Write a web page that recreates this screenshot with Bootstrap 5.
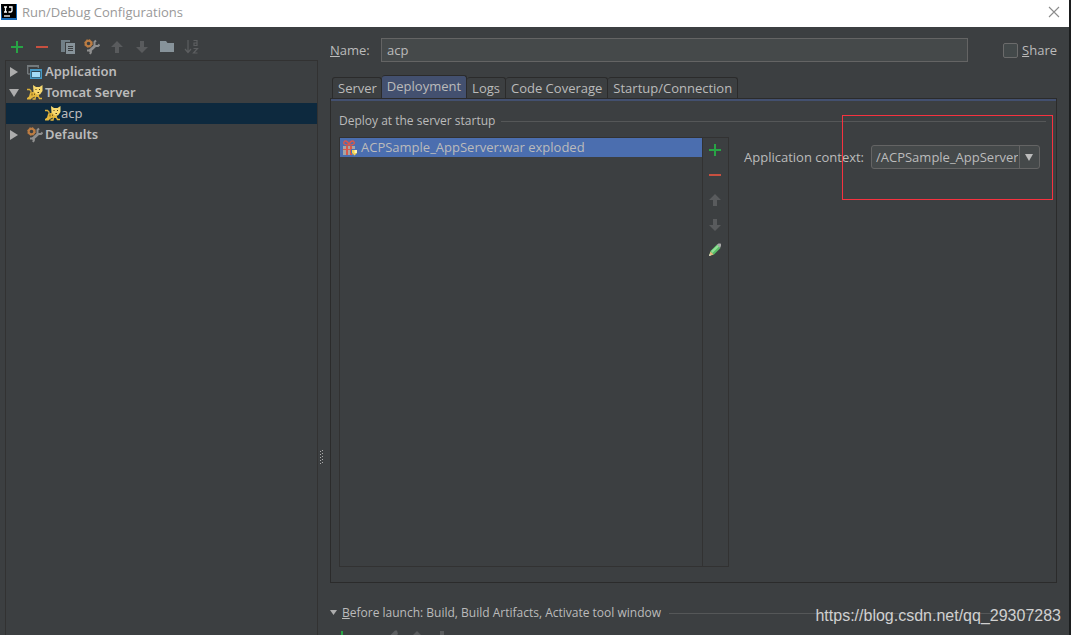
<!DOCTYPE html>
<html lang="en">
<head>
<meta charset="utf-8">
<meta name="viewport" content="width=device-width, initial-scale=1">
<title>Run/Debug Configurations</title>
<link href="https://cdn.jsdelivr.net/npm/bootstrap@5.3.0/dist/css/bootstrap.min.css" rel="stylesheet">
<style>
  :root { --bg: #3c3f41; --fg: #bbbbbb; --edge: #2b2b2b; --line: #555758; --soft: #323232; }
  body { font: 13px/20px "Open Sans", "Noto Sans", sans-serif; color: var(--fg); background: var(--bg); }
  svg { display: block; flex: none; }
  .window { height: 100vh; overflow: hidden; border-right: 2px solid #1b1d1e; }
  .titlebar { height: 27px; background: #fff; color: #999; padding: 0 7px 4px 1px; gap: 5px; }
  .tool { background: none; border: 0; padding: 0; width: 16px; height: 16px; color: #595b5d; }
  .workspace { min-height: 0; }
  .sidebar { width: 318px; padding-left: 5px; }
  .sidebar-tools { height: 33px; gap: 9px; padding: 7px 0 0 4px; }
  .tree { border: 1px solid var(--soft); border-bottom: 0; }
  .tree button { display: flex; align-items: center; width: 100%; height: 21px; border: 0; background: none; color: inherit; padding: 0; font-family: "Noto Sans", sans-serif; font-weight: 600; line-height: 19px; text-align: left; }
  .tree .arrow { margin-right: 5px; }
  .tree .kind { margin-right: 2px; }
  .tree .leaf { background: #0d293e; padding-left: 39px; font-weight: 400; }
  .splitter { width: 12px; padding-top: 206px; }
  .content { padding: 11px 12px 0 0; }
  .name-row { height: 24px; }
  .name-label { width: 51px; }
  .name-input { height: 24px; background: #45494a; border: 1px solid #646464; color: inherit; padding: 0 5px; min-width: 0; }
  .share-box { appearance: none; width: 15px; height: 15px; margin: 0 4px 0 35px; background: #43494a; border: 1px solid #6b6b6b; border-radius: 2px; }
  .share-box:checked { background: #4b6eaf; }
  .tabs { padding: 13px 0 0 2px; }
  .tabs button { height: 21px; padding: 0 5px; border: 1px solid var(--edge); border-bottom: 0; border-left-width: 0; border-radius: 3px 3px 0 0; background: none; color: inherit; white-space: nowrap; }
  .tabs button:first-child { border-left-width: 1px; padding-right: 4px; }
  .tabs .current { height: 23px; padding: 0 5px 2px; background: #43506f; }
  .tab-panel { border: 1px solid var(--edge); padding: 0 8px 15px; }
  .tab-panel::before { content: ""; display: block; height: 2px; margin: 0 -8px; background: #43506f; }
  .caption { font-size: 12px; font-weight: 400; line-height: 20px; height: 36px; padding: 4px 2px 0 0; gap: 6px; margin: 0; }
  .rule { height: 1px; background: var(--line); }
  .artifacts { width: 390px; border: 1px solid var(--soft); }
  .artifact { height: 19px; background: #4b6eaf; border: 0; color: inherit; line-height: 19px; padding: 0 0 0 2px; gap: 3px; }
  .artifact-tools { width: 26px; padding: 4px 0 0 4px; gap: 9px; border-left: 1px solid var(--soft); }
  .context { padding: 8px 8px 0 15px; height: 32px; }
  .combo { position: relative; width: 169px; }
  .combo select { appearance: none; width: 100%; height: 24px; background: #45494a; border: 1px solid #646464; border-radius: 3px; color: inherit; padding: 0 21px 0 4px; }
  .combo svg { position: absolute; right: 0; top: 0; pointer-events: none; }
  .context-highlight { position: absolute; right: -13px; top: -30px; width: 211px; height: 85px; border: 1px solid #f7323f; pointer-events: none; }
  .launch { height: 52px; padding: 20px 3px 0 0; overflow: hidden; font-size: 12px; }
  .launch button.toggle { border: 0; background: none; padding: 0; color: inherit; }
  .launch-tools { gap: 9px; padding-left: 4px; margin-top: 6px; }
  .watermark { position: absolute; right: 8px; bottom: 8px; font: 16px/22px "Liberation Sans", sans-serif; color: #d0d0d0; text-decoration: none; }
</style>
</head>
<body>
<svg class="d-none" aria-hidden="true">
  <symbol id="plus" viewBox="0 0 16 16"><path d="M2 8h12M8 2v12" stroke="#28a445" stroke-width="2"/></symbol>
  <symbol id="minus" viewBox="0 0 16 16"><path d="M2 8h12" stroke="#c75040" stroke-width="2"/></symbol>
  <symbol id="up" viewBox="0 0 16 16"><path d="M8 2l6 6h-4v6H6V8H2z" fill="currentColor"/></symbol>
  <symbol id="down" viewBox="0 0 16 16"><path d="M8 14l6-6h-4V2H6v6H2z" fill="currentColor"/></symbol>
  <symbol id="closed" viewBox="0 0 16 16"><path d="M4 3l8 5-8 5z" fill="#adadad"/></symbol>
  <symbol id="open" viewBox="0 0 16 16"><path d="M3 4h10l-5 8z" fill="#adadad"/></symbol>
  <symbol id="wrench" viewBox="0 0 16 16">
    <path d="M11.500 6.500L5.500 12" stroke="#8f8f8f" stroke-width="3"/>
    <path d="M12 1.500L10.500 3v3l1.500 1h2l1.500-1.500" fill="none" stroke="#8f8f8f" stroke-width="2"/>
    <path d="M3 11.500h2.500l1.500 1.500-1 2" fill="none" stroke="#8f8f8f" stroke-width="2"/>
    <circle cx="4.500" cy="4.500" r="2.800" fill="none" stroke="#bd7d43" stroke-width="2"/>
    <circle cx="4.500" cy="4.500" r="3.900" fill="none" stroke="#bd7d43" stroke-width="1" stroke-dasharray="1.600 1.460"/>
  </symbol>
  <symbol id="cat" viewBox="0 0 16 16">
    <path d="M0 4.500h2.500L4 6v2.500" fill="none" stroke="#d9ae38" stroke-width="1.300"/>
    <path d="M3 8l4-1.500 5 3V12h-2l-2-.5L5 13l-1.500 1.500H0V13l2-1.500z" fill="#e3b73d"/>
    <path d="M11 10.500l1.500 3h2.500M8.500 11L8 14H5.500" fill="none" stroke="#e3b73d" stroke-width="1.400"/>
    <path d="M5 8.500v2M7.500 8.500v1.500" stroke="#75591d" stroke-width="1"/>
    <path d="M6 0l3 2h3.500L15.500 0v6L13 9.500h-3L6.500 6.500z" fill="#f8d96f"/>
    <path d="M8.500 4.500h1M12 4.500h1M10.500 7.500H12" stroke="#49381a" stroke-width="1"/>
  </symbol>
  <symbol id="pencil" viewBox="0 0 16 16">
    <path d="M2 14l1.500-5L10 2.500 13.500 6 7 12.500z" fill="#59bd67"/>
    <path d="M4 9l6.500-6 1.500 1.500L5.500 11z" fill="#91df96"/>
    <path d="M10 2.500L11.500 1.500h2l.5.500v2L13 6z" fill="#a8a8a8"/>
    <path d="M2 14l1.500-4.500 3 3z" fill="#e6b67d"/><path d="M2 14l.7-2 1.300 1.300z" fill="#ddd"/>
  </symbol>
</svg>
<div class="window d-flex flex-column position-relative">
  <header class="titlebar d-flex align-items-center">
    <svg width="16" height="16" viewBox="0 0 16 16"><rect width="16" height="16" fill="#1769b8"/><path d="M0 0h15v14H1z" fill="#000"/><path d="M3 3h3M4.500 3v5M3 8h3M8 3h3v4l-1 1H7.500" fill="none" stroke="#fff" stroke-width="1.300"/><path d="M3 12h6" stroke="#fff" stroke-width="1.300"/></svg>
    <span class="flex-fill">Run/Debug Configurations</span>
    <button class="tool" aria-label="Close"><svg width="16" height="16" viewBox="0 0 16 16"><path d="M3 3l10 10M13 3L3 13" stroke="#8c8c8c" stroke-width="1.100"/></svg></button>
  </header>
  <main class="workspace d-flex flex-fill">
    <aside class="sidebar d-flex flex-column flex-shrink-0">
      <div class="sidebar-tools d-flex align-items-center flex-shrink-0">
        <button class="tool" aria-label="Add"><svg width="16" height="16"><use href="#plus"/></svg></button>
        <button class="tool" aria-label="Remove"><svg width="16" height="16"><use href="#minus"/></svg></button>
        <button class="tool" aria-label="Copy"><svg width="16" height="16" viewBox="0 0 16 16"><path d="M2 1h9v2H6v10H2z" fill="#717f87"/><path d="M7 4h9v11H7z" fill="#87939a"/><path d="M9 7.500h5M9 9.500h5M9 11.500h5" stroke="#3c3f41"/></svg></button>
        <button class="tool" aria-label="Edit defaults"><svg width="16" height="16"><use href="#wrench"/></svg></button>
        <button class="tool" aria-label="Move up"><svg width="16" height="16"><use href="#up"/></svg></button>
        <button class="tool" aria-label="Move down"><svg width="16" height="16"><use href="#down"/></svg></button>
        <button class="tool" aria-label="New folder"><svg width="16" height="16" viewBox="0 0 16 16"><path d="M1 2h6l1.500 2H15v9H1z" fill="#87939a"/></svg></button>
        <button class="tool" aria-label="Sort"><svg width="16" height="16" viewBox="0 0 16 16"><path d="M4 1v12M1 10l3 3.500L7 10M9.500 1.500h3.500V7M13 4h-3v2.500h3M9.500 9.500h4l-4 4.500h4" fill="none" stroke="#5c5e60" stroke-width="1.200"/></svg></button>
      </div>
      <nav class="tree flex-fill" aria-label="Configurations">
        <button><svg class="arrow" width="16" height="16"><use href="#closed"/></svg><svg class="kind" width="16" height="16" viewBox="0 0 16 16"><path d="M.700 10V1.700h10.600V4M.700 10H3" fill="none" stroke="#73797c" stroke-width="1.400"/><path d="M0 1h12v2H0z" fill="#73797c"/><path d="M3.700 5.700h10.600v8.600H3.700z" fill="#2f4450" stroke="#4799c4" stroke-width="1.400"/><path d="M3 5h12v2H3z" fill="#4799c4"/><path d="M5 8h8v5H5z" fill="#a4dcf7"/></svg>Application</button>
        <button><svg class="arrow" width="16" height="16"><use href="#open"/></svg><svg class="kind" width="16" height="16"><use href="#cat"/></svg>Tomcat Server</button>
        <button class="leaf"><svg width="16" height="16"><use href="#cat"/></svg>acp</button>
        <button><svg class="arrow" width="16" height="16"><use href="#closed"/></svg><svg class="kind" width="16" height="16"><use href="#wrench"/></svg>Defaults</button>
      </nav>
    </aside>
    <div class="splitter d-flex align-items-center flex-shrink-0">
      <svg width="6" height="16" viewBox="0 0 6 16" class="mt-5"><path d="M2.500 1v15M4.500 0v14" stroke="#aaa" stroke-dasharray="1 2"/></svg>
    </div>
    <section class="content d-flex flex-column flex-fill">
      <div class="name-row d-flex align-items-center flex-shrink-0">
        <label class="name-label" for="name"><u>N</u>ame:</label>
        <input class="name-input flex-fill" id="name" type="text" value="acp">
        <input class="share-box" id="share" type="checkbox">
        <label for="share"><u>S</u>hare</label>
      </div>
      <div class="tabs d-flex align-items-end flex-shrink-0" role="tablist">
        <button role="tab">Server</button>
        <button role="tab" class="current" aria-selected="true">Deployment</button>
        <button role="tab">Logs</button>
        <button role="tab">Code Coverage</button>
        <button role="tab">Startup/Connection</button>
      </div>
      <div class="tab-panel d-flex flex-column flex-fill" role="tabpanel">
        <h2 class="caption d-flex align-items-center flex-shrink-0">Deploy at the server startup<span class="rule flex-fill"></span></h2>
        <div class="d-flex flex-fill">
          <div class="artifacts d-flex flex-shrink-0">
            <div class="flex-fill">
              <button class="artifact d-flex align-items-center w-100">
                <svg width="16" height="16" viewBox="0 0 16 16"><path d="M7 5C3 5 1 4 2 2s4-1 5 3c1-4 4-5 5-3s-1 3-5 3z" fill="none" stroke="#d8584b" stroke-width="1.400"/><path d="M1 6h12v3H1zM1 10h12v5H1z" fill="#a5a5a5"/><path d="M4 6h2v9H4zM8 6h2v9H8zM1 9h12v1H1z" fill="#d8584b"/><path d="M9 9h6v4l-3 3-3-3z" fill="#4b6eaf"/><path d="M10 10h5v3l-2.500 2.500L10 13z" fill="#f3d252"/><path d="M12.500 10H15v3h-2.500z" fill="#fff3b3"/></svg>
                ACPSample_AppServer:war exploded
              </button>
            </div>
            <div class="artifact-tools d-flex flex-column flex-shrink-0">
              <button class="tool" aria-label="Add artifact"><svg width="16" height="16"><use href="#plus"/></svg></button>
              <button class="tool" aria-label="Remove artifact"><svg width="16" height="16"><use href="#minus"/></svg></button>
              <button class="tool" aria-label="Move artifact up"><svg width="16" height="16"><use href="#up"/></svg></button>
              <button class="tool" aria-label="Move artifact down"><svg width="16" height="16"><use href="#down"/></svg></button>
              <button class="tool" aria-label="Edit artifact"><svg width="16" height="16"><use href="#pencil"/></svg></button>
            </div>
          </div>
          <div class="context d-flex align-items-center justify-content-between flex-fill">
            <label for="context">Application context:</label>
            <div class="combo">
              <select id="context"><option>/ACPSample_AppServer</option></select>
              <svg width="21" height="24" viewBox="0 0 21 24"><path d="M.5 1v22" stroke="#646464"/><path d="M6 9h8l-4 7z" fill="#bbb"/></svg>
              <div class="context-highlight"></div>
            </div>
          </div>
        </div>
      </div>
      <div class="launch flex-shrink-0">
        <div class="d-flex align-items-center gap-2">
          <button class="toggle d-flex align-items-center"><svg width="12" height="16" viewBox="0 0 12 16"><path d="M0 5h7l-3.500 5z" fill="#adadad"/></svg><span><u>B</u>efore launch: Build, Build Artifacts, Activate tool window</span></button>
          <span class="rule flex-fill"></span>
        </div>
        <div class="launch-tools d-flex">
          <button class="tool" aria-label="Add task"><svg width="16" height="16"><use href="#plus"/></svg></button>
          <button class="tool" aria-label="Remove task"><svg width="16" height="16"><use href="#minus"/></svg></button>
          <button class="tool" aria-label="Edit task"><svg width="16" height="16" viewBox="0 0 16 16"><path d="M2 14l1.500-5L11 1.500h2L14 5l-7 7.500z" fill="#5c5e60"/></svg></button>
          <button class="tool" aria-label="Move task up"><svg width="16" height="16"><use href="#up"/></svg></button>
          <button class="tool" aria-label="Move task down"><svg width="16" height="16"><use href="#down"/></svg></button>
        </div>
      </div>
    </section>
  </main>
  <a class="watermark" href="https://blog.csdn.net/qq_29307283">https://blog.csdn.net/qq_29307283</a>
</div>
<script src="https://cdn.jsdelivr.net/npm/bootstrap@5.3.0/dist/js/bootstrap.bundle.min.js"></script>
</body>
</html>
